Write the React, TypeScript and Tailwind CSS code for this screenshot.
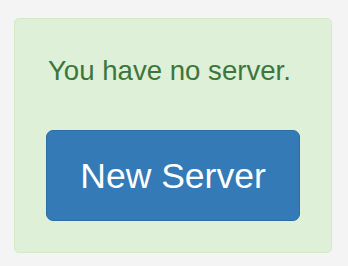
import React from "react";

export default function App() {
  return (
    <div className="w-[348px] h-[266px] bg-[#f4f4f4] pt-[18px] pl-[14px] font-['Liberation_Sans',Arial,sans-serif]">
      <div className="w-[318px] h-[235px] rounded-[5px] border border-[#d6e9c6] bg-[#dff0d8] px-[31px] pt-[37px]">
        <p className="pl-[2px] text-[27.6px] leading-[30px] text-[#3c763d]">You have no server.</p>
        <button
          type="button"
          className="mt-[44px] w-[254px] h-[91px] rounded-[7px] border border-[#2e6da4] bg-[#337ab7] text-[35.5px] leading-[38px] text-white"
        >
          New Server
        </button>
      </div>
    </div>
  );
}
